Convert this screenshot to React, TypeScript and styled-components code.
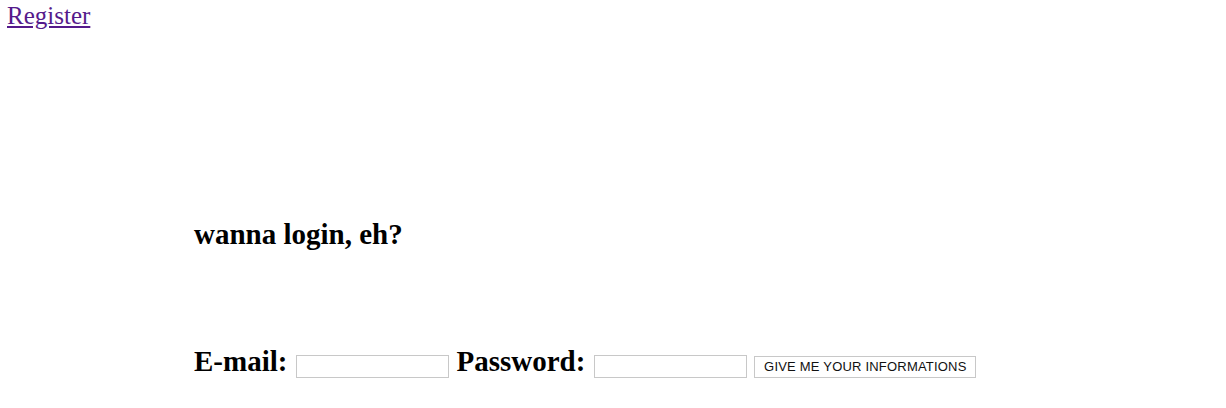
import styled, { createGlobalStyle } from "styled-components";

const GlobalStyle = createGlobalStyle`
  html, body {
    margin: 0;
    padding: 0;
    background: #fff;
    font-family: "Liberation Serif", "Times New Roman", serif;
    color: #000;
  }
`;

const Page = styled.div`
  width: 1226px;
  height: 408px;
  overflow: hidden;
`;

const TopLink = styled.a`
  display: inline-block;
  margin: 0 0 0 7px;
  font-size: 25px;
  line-height: 32px;
  color: #551a8b;
  text-decoration: underline;
`;

const Content = styled.div`
  padding: 0 0 0 194px;
`;

const Title = styled.h2`
  margin: 182px 0 0 0;
  font-size: 29px;
  line-height: 40px;
  font-weight: bold;
`;

const Form = styled.form`
  display: flex;
  align-items: baseline;
  margin-top: 89px;
`;

const Label = styled.label`
  font-size: 29px;
  font-weight: bold;
  line-height: 36px;
  margin-right: 9px;
`;

const Field = styled.input`
  box-sizing: border-box;
  width: 153px;
  height: 23px;
  border: 1px solid #c8c8c8;
  padding: 0 4px;
  margin-right: 7px;
  font-size: 13px;
  outline: none;
`;

const Submit = styled.button`
  box-sizing: border-box;
  height: 22px;
  width: 222px;
  border: 1px solid #c8c8c8;
  background: #fff;
  padding: 0;
  font-family: "Liberation Sans", Arial, sans-serif;
  font-size: 13px;
  letter-spacing: 0.2px;
  color: #111;
`;

export default function App() {
  return (
    <Page>
      <GlobalStyle />
      <TopLink href="#">Register</TopLink>
      <Content>
        <Title>wanna login, eh?</Title>
        <Form onSubmit={(e) => e.preventDefault()}>
          <Label>E-mail:</Label>
          <Field type="text" />
          <Label>Password:</Label>
          <Field type="password" />
          <Submit type="submit">GIVE ME YOUR INFORMATIONS</Submit>
        </Form>
      </Content>
    </Page>
  );
}
